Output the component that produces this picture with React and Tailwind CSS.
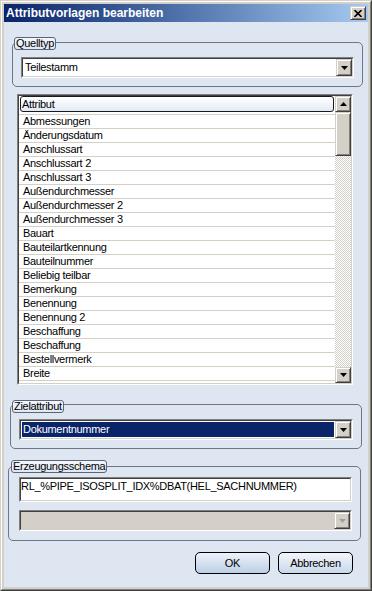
import React from "react";

const rows = [
  "Abmessungen",
  "Änderungsdatum",
  "Anschlussart",
  "Anschlussart 2",
  "Anschlussart 3",
  "Außendurchmesser",
  "Außendurchmesser 2",
  "Außendurchmesser 3",
  "Bauart",
  "Bauteilartkennung",
  "Bauteilnummer",
  "Beliebig teilbar",
  "Bemerkung",
  "Benennung",
  "Benennung 2",
  "Beschaffung",
  "Beschaffung",
  "Bestellvermerk",
  "Breite",
  "Dichte",
];

function Arrow({ up = false, color = "#000000" }) {
  return (
    <svg width="7" height="4" viewBox="0 0 7 4" className="block">
      {up ? (
        <path d="M3.5 0 L7 4 L0 4 Z" fill={color} />
      ) : (
        <path d="M0 0 L7 0 L3.5 4 Z" fill={color} />
      )}
    </svg>
  );
}

function RaisedBtn({ className = "", children }) {
  return (
    <div
      className={
        "flex items-center justify-center bg-[#d4d0c8] border border-t-[#d4d0c8] border-l-[#d4d0c8] border-r-[#404040] border-b-[#404040] shadow-[inset_1px_1px_0_#ffffff,inset_-1px_-1px_0_#808080] " +
        className
      }
    >
      {children}
    </div>
  );
}

function Sunken({ className = "", innerClass = "", children }) {
  return (
    <div
      className={
        "border border-t-[#808080] border-l-[#808080] border-r-[#ffffff] border-b-[#ffffff] " +
        className
      }
    >
      <div
        className={
          "w-full h-full border border-t-[#404040] border-l-[#404040] border-r-[#d4d0c8] border-b-[#d4d0c8] " +
          innerClass
        }
      >
        {children}
      </div>
    </div>
  );
}

function Combo({ width, text, selected = false, disabled = false }) {
  return (
    <Sunken
      className={width + " h-[21px]"}
      innerClass={"flex " + (disabled ? "bg-[#d4d0c8]" : "bg-white")}
    >
      <div className="flex-1 flex items-stretch p-[1px] overflow-hidden">
        <div
          className={
            "flex-1 flex items-center pl-[1px] leading-[13px] " +
            (selected ? "bg-[#0a246a] text-white" : "text-black")
          }
        >
          {text}
        </div>
      </div>
      <RaisedBtn className="w-[16px] h-full">
        <Arrow color={disabled ? "#a0a0a0" : "#000000"} />
      </RaisedBtn>
    </Sunken>
  );
}

function Group({ className, legend, legendLeft, legendTop, children }) {
  return (
    <div
      className={
        "relative border border-[#6e7688] rounded-[5px] " + className
      }
    >
      <div
        className={
          "absolute h-[13px] px-[1px] flex items-center border border-[#5c6478] rounded-[3px] bg-linear-to-b from-[#f4f7fc] to-[#dfe7f3] leading-[11px] " +
          legendLeft +
          " " +
          legendTop
        }
      >
        {legend}
      </div>
      {children}
    </div>
  );
}

export default function App() {
  return (
    <div className="w-[372px] h-[591px] bg-[#d4d0c8] border border-t-[#d4d0c8] border-l-[#d4d0c8] border-r-[#404040] border-b-[#404040] font-['Liberation_Sans',Arial,sans-serif] text-[11px] tracking-[-0.3px] text-black overflow-hidden">
      <div className="w-full h-full border border-t-white border-l-white border-r-[#808080] border-b-[#808080] p-[2px] flex flex-col">
        {/* Title bar */}
        <div className="h-[18px] flex items-center justify-between bg-linear-to-r from-[#0a246a] to-[#a6caf0] pl-[2px] pr-[2px]">
          <span className="text-white font-bold text-[12px] tracking-normal leading-[16px]">
            Attributvorlagen bearbeiten
          </span>
          <RaisedBtn className="w-[16px] h-[14px]">
            <svg width="8" height="7" viewBox="0 0 8 7" className="block">
              <path
                d="M0.5 0 L7.5 7 M7.5 0 L0.5 7"
                stroke="#000"
                strokeWidth="1.6"
              />
            </svg>
          </RaisedBtn>
        </div>

        {/* Body */}
        <div className="flex-1 bg-[#dee6f2] flex flex-col">
          {/* Quelltyp */}
          <Group
            className="mt-[20px] ml-[8px] w-[351px] h-[45px] pt-[14px] pl-[8px]"
            legend="Quelltyp"
            legendLeft="left-[1px]"
            legendTop="-top-[6px]"
          >
            <Combo width="w-[333px]" text="Teilestamm" />
          </Group>

          {/* List */}
          <Sunken
            className="mt-[7px] ml-[13px] w-[336px] h-[291px]"
            innerClass="flex bg-white"
          >
            <div className="w-[316px] h-full flex flex-col overflow-hidden">
              <div className="h-[18px] shrink-0 px-[1px]">
                <div className="h-[16px] border border-[#1a1a1a] rounded-[3px] bg-linear-to-b from-[#ffffff] to-[#e3eaf5] flex items-center pl-[1px] leading-[13px]">
                  Attribut
                </div>
              </div>
              {rows.map((r, i) => (
                <div
                  key={i}
                  className="h-[14px] shrink-0 border-t border-[#d4d0c8] pl-[4px] leading-[13px] whitespace-nowrap"
                >
                  {r}
                </div>
              ))}
            </div>
            <div className="w-[16px] h-full flex flex-col">
              <RaisedBtn className="w-[16px] h-[16px] shrink-0">
                <Arrow up />
              </RaisedBtn>
              <RaisedBtn className="w-[16px] h-[44px] shrink-0" />
              <div className="flex-1 bg-[image:repeating-conic-gradient(#d4d0c8_0%_25%,#ffffff_0%_50%)] bg-[length:2px_2px]" />
              <RaisedBtn className="w-[16px] h-[16px] shrink-0">
                <Arrow />
              </RaisedBtn>
            </div>
          </Sunken>

          {/* Zielattribut */}
          <Group
            className="mt-[19px] ml-[6px] w-[352px] h-[45px] pt-[14px] pl-[8px]"
            legend="Zielattribut"
            legendLeft="left-[1px]"
            legendTop="-top-[5px]"
          >
            <Combo width="w-[334px]" text="Dokumentnummer" selected />
          </Group>

          {/* Erzeugungsschema */}
          <Group
            className="mt-[17px] ml-[4px] w-[353px] h-[75px] pt-[10px] pl-[10px]"
            legend="Erzeugungsschema"
            legendLeft="left-[2px]"
            legendTop="-top-[7px]"
          >
            <Sunken className="w-[333px] h-[25px]" innerClass="bg-white pt-[1px]">
              <div className="leading-[13px] pl-[0px] whitespace-nowrap">
                RL_%PIPE_ISOSPLIT_IDX%DBAT(HEL_SACHNUMMER)
              </div>
            </Sunken>
            <div className="mt-[8px]">
              <Combo width="w-[333px]" text="" disabled />
            </div>
          </Group>

          {/* Buttons */}
          <div className="mt-[11px] flex justify-end gap-[8px] pr-[15px]">
            <div className="w-[75px] h-[22px] rounded-[5px] border border-black bg-linear-to-b from-[#eef3fa] to-[#bccee6] flex items-center justify-center leading-[13px]">
              OK
            </div>
            <div className="w-[75px] h-[22px] rounded-[5px] border border-black bg-linear-to-b from-[#f3f6fb] to-[#c9d8ec] flex items-center justify-center leading-[13px]">
              Abbrechen
            </div>
          </div>
        </div>
      </div>
    </div>
  );
}
